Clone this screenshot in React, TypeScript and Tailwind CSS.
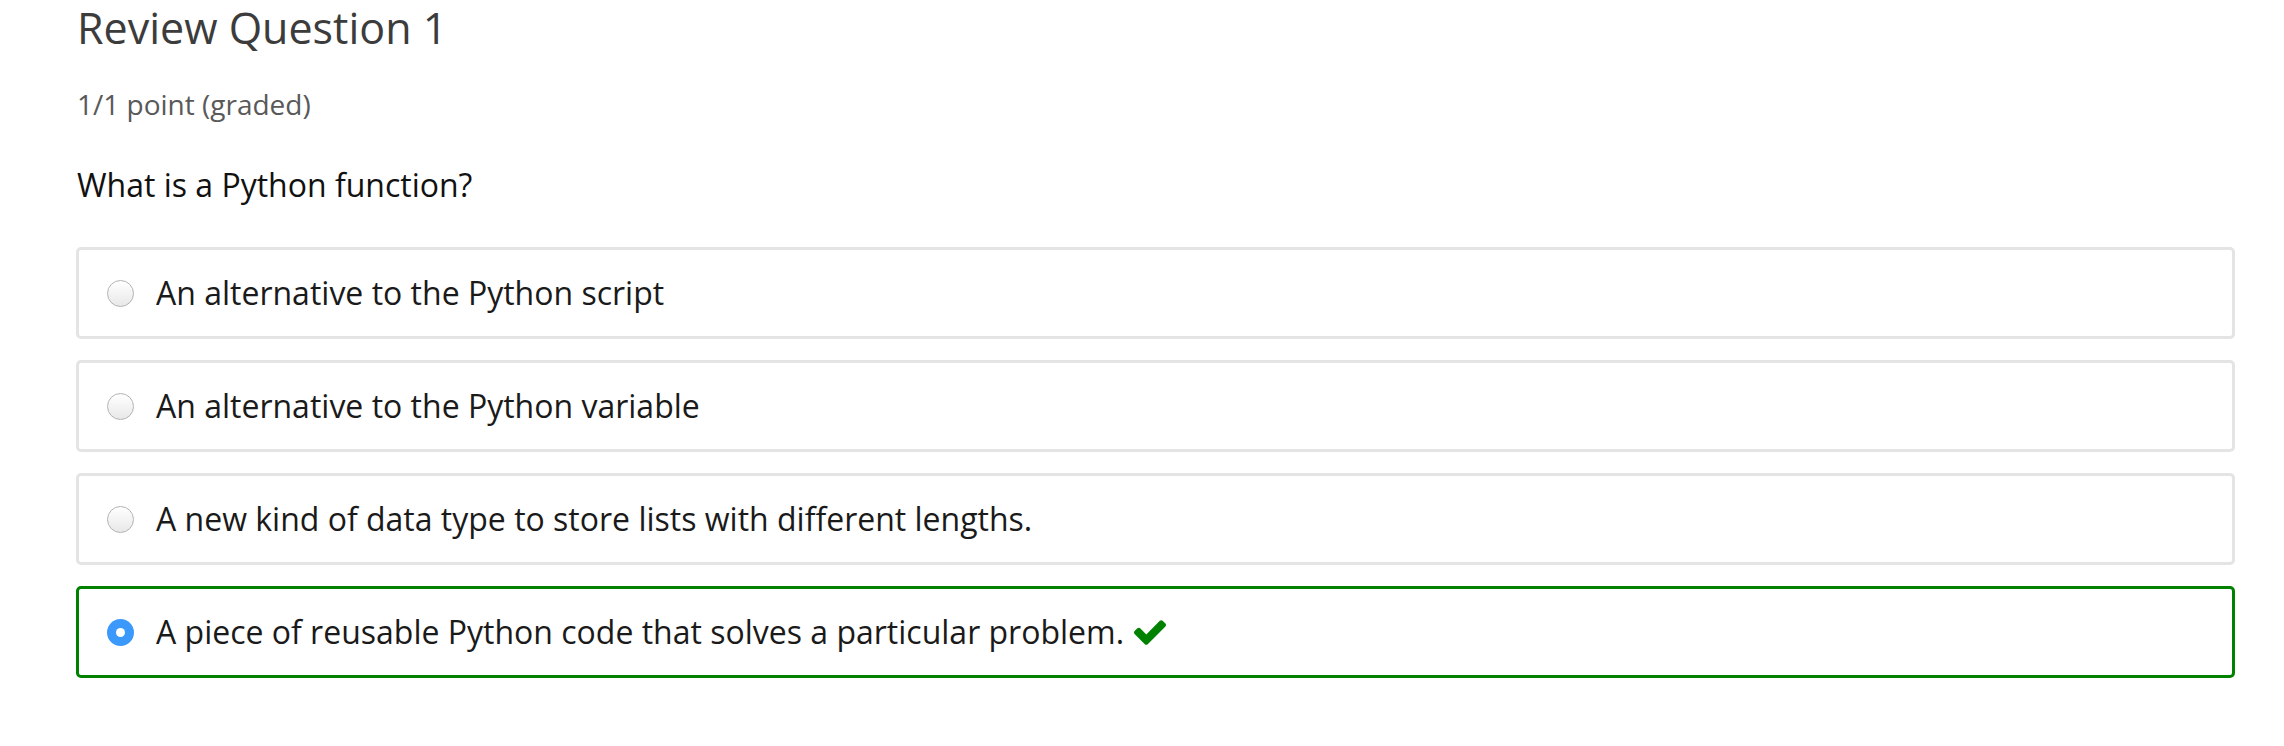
import React from 'react'

interface OptionProps {
    label: string
    checked?: boolean
    correct?: boolean
}

const options: OptionProps[] = [
    { label: 'An alternative to the Python script' },
    { label: 'An alternative to the Python variable' },
    { label: 'A new kind of data type to store lists with different lengths.' },
    {
        label: 'A piece of reusable Python code that solves a particular problem.',
        checked: true,
        correct: true,
    },
]

const CheckIcon = () => (
    <svg
        viewBox="121 334 1550 1188"
        width="32"
        height="25"
        className="ml-[10px] shrink-0"
    >
        <path
            fill="#008100"
            d="M1671 566q0 40-28 68l-724 724-136 136q-28 28-68 28t-68-28l-136-136-362-362q-28-28-28-68t28-68l136-136q28-28 68-28t68 28l294 295 656-657q28-28 68-28t68 28l136 136q28 28 28 68z"
        />
    </svg>
)

const Radio = ({ checked }: { checked?: boolean }) => {
    if (checked) {
        return (
            <span className="w-[27px] h-[27px] rounded-full bg-[#3b99fc] flex items-center justify-center shrink-0">
                <span className="w-[9px] h-[9px] rounded-full bg-white" />
            </span>
        )
    }
    return (
        <span className="w-[27px] h-[27px] rounded-full border-[1.5px] border-[#b3b3b3] bg-gradient-to-b from-white to-[#e8e8e8] shrink-0" />
    )
}

const App = () => {
    return (
        <div className="min-h-screen bg-white pl-[76px] pr-[49px] font-['Open_Sans',sans-serif]">
            {/* header */}
            <h2 className="text-[43px] leading-[56px] text-[#3c3c3c] pl-[1px]">
                Review Question 1
            </h2>
            <div className="mt-[27px] text-[28px] leading-normal text-[#595959] pl-[1px]">
                1/1 point (graded)
            </div>

            {/* question */}
            <div className="mt-[36px] text-[32px] leading-normal text-[#111] pl-[1px]">
                What is a Python function?
            </div>

            {/* options */}
            <div className="mt-[38px] flex flex-col gap-[21px]">
                {options.map((item: OptionProps) => {
                    return (
                        <div
                            key={item.label}
                            className={
                                item.correct
                                    ? 'h-[92px] border-[3px] border-[#008100] rounded-[5px] flex items-center pl-[28px]'
                                    : 'h-[92px] border-[3px] border-[#e4e4e4] rounded-[5px] flex items-center pl-[28px]'
                            }
                        >
                            <Radio checked={item.checked} />
                            <span className="ml-[22px] text-[32px] text-[#1a1a1a] leading-normal">
                                {item.label}
                            </span>
                            {item.correct && <CheckIcon />}
                        </div>
                    )
                })}
            </div>
        </div>
    )
}

export default App
